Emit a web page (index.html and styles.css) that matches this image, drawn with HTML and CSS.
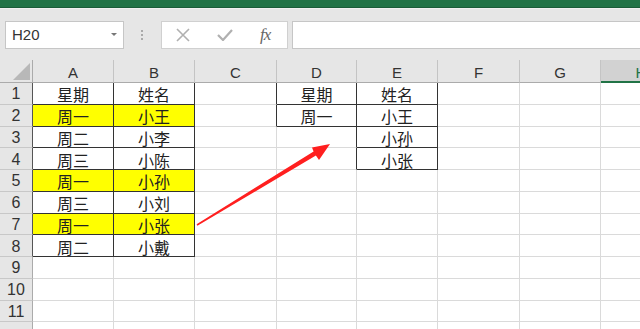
FILE: index.html
```html
<!DOCTYPE html>
<html lang="zh-CN">
<head>
    <meta charset="UTF-8">
    <meta name="viewport" content="width=device-width, initial-scale=1.0">
    <title>Sheet1</title>
    <link rel="stylesheet" href="styles.css">
</head>
<body>
    <div class="app">
        <div class="ribbon-edge"></div>

        <!-- Name box + formula bar -->
        <div class="formula-bar">
            <div class="name-box">
                <span>H20</span>
                <span class="caret"></span>
            </div>
            <div class="grip"><span></span><span></span><span></span></div>
            <div class="fx-buttons">
                <svg class="fx-icon" width="14" height="14" viewBox="0 0 14 14"><path d="M1 1 L13 13 M13 1 L1 13" stroke="#b0b0b0" stroke-width="1.6" fill="none"/></svg>
                <svg class="fx-icon" width="16" height="12" viewBox="0 0 16 12"><path d="M1 6 L6 11 L15 1" stroke="#b0b0b0" stroke-width="2.2" fill="none"/></svg>
                <span class="fx">fx</span>
            </div>
            <div class="formula-input"></div>
        </div>

        <!-- Worksheet -->
        <div class="sheet">
            <div class="corner"><svg width="17" height="17" viewBox="0 0 17 17"><polygon points="17,0 17,17 0,17" fill="#b8b8b8"/></svg></div>
            <div class="col-head">A</div>
            <div class="col-head">B</div>
            <div class="col-head">C</div>
            <div class="col-head">D</div>
            <div class="col-head">E</div>
            <div class="col-head">F</div>
            <div class="col-head">G</div>
            <div class="col-head active">H</div>

            <div class="row-head br">1</div>
            <div class="cell bx">星期</div>
            <div class="cell bx">姓名</div>
            <div class="cell br"></div>
            <div class="cell bx">星期</div>
            <div class="cell bx">姓名</div>
            <div class="cell"></div>
            <div class="cell"></div>
            <div class="cell"></div>

            <div class="row-head br">2</div>
            <div class="cell bx hl">周一</div>
            <div class="cell bx hl">小王</div>
            <div class="cell br"></div>
            <div class="cell bx">周一</div>
            <div class="cell bx">小王</div>
            <div class="cell"></div>
            <div class="cell"></div>
            <div class="cell"></div>

            <div class="row-head br">3</div>
            <div class="cell bx">周二</div>
            <div class="cell bx">小李</div>
            <div class="cell"></div>
            <div class="cell br"></div>
            <div class="cell bx">小孙</div>
            <div class="cell"></div>
            <div class="cell"></div>
            <div class="cell"></div>

            <div class="row-head br">4</div>
            <div class="cell bx">周三</div>
            <div class="cell bx">小陈</div>
            <div class="cell"></div>
            <div class="cell br"></div>
            <div class="cell bx">小张</div>
            <div class="cell"></div>
            <div class="cell"></div>
            <div class="cell"></div>

            <div class="row-head br">5</div>
            <div class="cell bx hl">周一</div>
            <div class="cell bx hl">小孙</div>
            <div class="cell"></div>
            <div class="cell"></div>
            <div class="cell"></div>
            <div class="cell"></div>
            <div class="cell"></div>
            <div class="cell"></div>

            <div class="row-head br">6</div>
            <div class="cell bx">周三</div>
            <div class="cell bx">小刘</div>
            <div class="cell"></div>
            <div class="cell"></div>
            <div class="cell"></div>
            <div class="cell"></div>
            <div class="cell"></div>
            <div class="cell"></div>

            <div class="row-head br">7</div>
            <div class="cell bx hl">周一</div>
            <div class="cell bx hl">小张</div>
            <div class="cell"></div>
            <div class="cell"></div>
            <div class="cell"></div>
            <div class="cell"></div>
            <div class="cell"></div>
            <div class="cell"></div>

            <div class="row-head br">8</div>
            <div class="cell bx">周二</div>
            <div class="cell bx">小戴</div>
            <div class="cell"></div>
            <div class="cell"></div>
            <div class="cell"></div>
            <div class="cell"></div>
            <div class="cell"></div>
            <div class="cell"></div>

            <div class="row-head">9</div>
            <div class="cell"></div>
            <div class="cell"></div>
            <div class="cell"></div>
            <div class="cell"></div>
            <div class="cell"></div>
            <div class="cell"></div>
            <div class="cell"></div>
            <div class="cell"></div>

            <div class="row-head">10</div>
            <div class="cell"></div>
            <div class="cell"></div>
            <div class="cell"></div>
            <div class="cell"></div>
            <div class="cell"></div>
            <div class="cell"></div>
            <div class="cell"></div>
            <div class="cell"></div>

            <div class="row-head">11</div>
            <div class="cell"></div>
            <div class="cell"></div>
            <div class="cell"></div>
            <div class="cell"></div>
            <div class="cell"></div>
            <div class="cell"></div>
            <div class="cell"></div>
            <div class="cell"></div>

            <!-- row 12, only its top edge is in view -->
            <div class="row-head"></div>
            <div class="cell"></div>
            <div class="cell"></div>
            <div class="cell"></div>
            <div class="cell"></div>
            <div class="cell"></div>
            <div class="cell"></div>
            <div class="cell"></div>
            <div class="cell"></div>
        </div>

        <!-- red annotation arrow drawn over the sheet -->
        <svg class="arrow" width="640" height="329" viewBox="0 0 640 329">
            <polygon points="197.4,225.8 315.9,155.4 319,160 330,144 312,147.5 313.6,151.6 196.6,224.2" fill="#ff1f1f"/>
        </svg>
    </div>
</body>
</html>
```

FILE: styles.css
```css
body {
    margin: 0;
    padding: 0;
    background-color: #e6e6e6;
    font-family: "Liberation Sans", Arial, sans-serif;
    color: #333;
    overflow: hidden;
}

.app {
    position: relative;
    width: 640px;
    height: 329px;
    overflow: hidden;
}

.ribbon-edge {
    height: 7px;
    background-color: #217346;
    border-bottom: 1px solid #1a5c38;
}

.formula-bar {
    display: flex;
    align-items: center;
    height: 52px;
    padding: 0 0 0 5px;
    border-top: 1px solid #f0f0f0;
    box-sizing: border-box;
}

.name-box {
    display: flex;
    align-items: center;
    justify-content: space-between;
    width: 119px;
    height: 28px;
    box-sizing: border-box;
    padding: 0 6px 0 6px;
    background-color: #fff;
    border: 1px solid #c6c6c6;
    font-size: 15px;
    color: #333;
}

.caret {
    width: 0;
    height: 0;
    border-left: 3px solid transparent;
    border-right: 3px solid transparent;
    border-top: 3px solid #777;
}

.grip {
    display: flex;
    flex-direction: column;
    gap: 2px;
    margin: 0 18px 0 17px;
}

.grip span {
    width: 2px;
    height: 2px;
    background-color: #aaa;
}

.fx-buttons {
    display: flex;
    align-items: center;
    width: 127px;
    height: 28px;
    box-sizing: border-box;
    background-color: #fff;
    border: 1px solid #d0d0d0;
    padding-left: 14px;
}

.fx-icon {
    margin-right: 27px;
}

.fx {
    font-family: "Liberation Serif", "Times New Roman", serif;
    font-style: italic;
    font-size: 17px;
    color: #666;
    letter-spacing: -1px;
}

.formula-input {
    flex: 1;
    height: 28px;
    margin-left: 4px;
    box-sizing: border-box;
    background-color: #fff;
    border: 1px solid #c6c6c6;
    border-right: none;
}

.sheet {
    display: grid;
    grid-template-columns: 33px 81px 81px 82px 80px 81px 82px 81px 81px;
    grid-template-rows: 23px repeat(11, 21.75px) 20px;
    background-color: #fff;
}

.corner {
    display: flex;
    align-items: flex-end;
    justify-content: flex-end;
    padding: 0 2px 2px 0;
    background-color: #e6e6e6;
    border-right: 1px solid #ababab;
    border-bottom: 1px solid #ababab;
}

.col-head {
    display: flex;
    align-items: center;
    justify-content: center;
    padding-top: 3px;
    background-color: #e6e6e6;
    border-right: 1px solid #c4c4c4;
    border-bottom: 1px solid #ababab;
    font-size: 15px;
    color: #333;
}

.col-head.active {
    background-color: #d2d2d2;
    color: #217346;
    border-bottom: 2px solid #217346;
}

.row-head {
    display: flex;
    align-items: center;
    justify-content: center;
    padding-top: 2px;
    background-color: #e6e6e6;
    border-right: 1px solid #ababab;
    border-bottom: 1px solid #c8c8c8;
    font-size: 16px;
    color: #333;
}

.cell {
    display: flex;
    align-items: center;
    justify-content: center;
    padding-top: 2px;
    border-right: 1px solid #dadada;
    border-bottom: 1px solid #dadada;
    font-family: "Noto Sans CJK SC", sans-serif;
    font-size: 16px;
    color: #222;
}

.cell.hl {
    background-color: #ffff00;
}

.cell.bx {
    border-right-color: #333;
    border-bottom-color: #333;
}

.br {
    border-right-color: #333;
}

.row-head.br {
    border-right-color: #555;
}

.arrow {
    position: absolute;
    top: 0;
    left: 0;
    pointer-events: none;
}
```
